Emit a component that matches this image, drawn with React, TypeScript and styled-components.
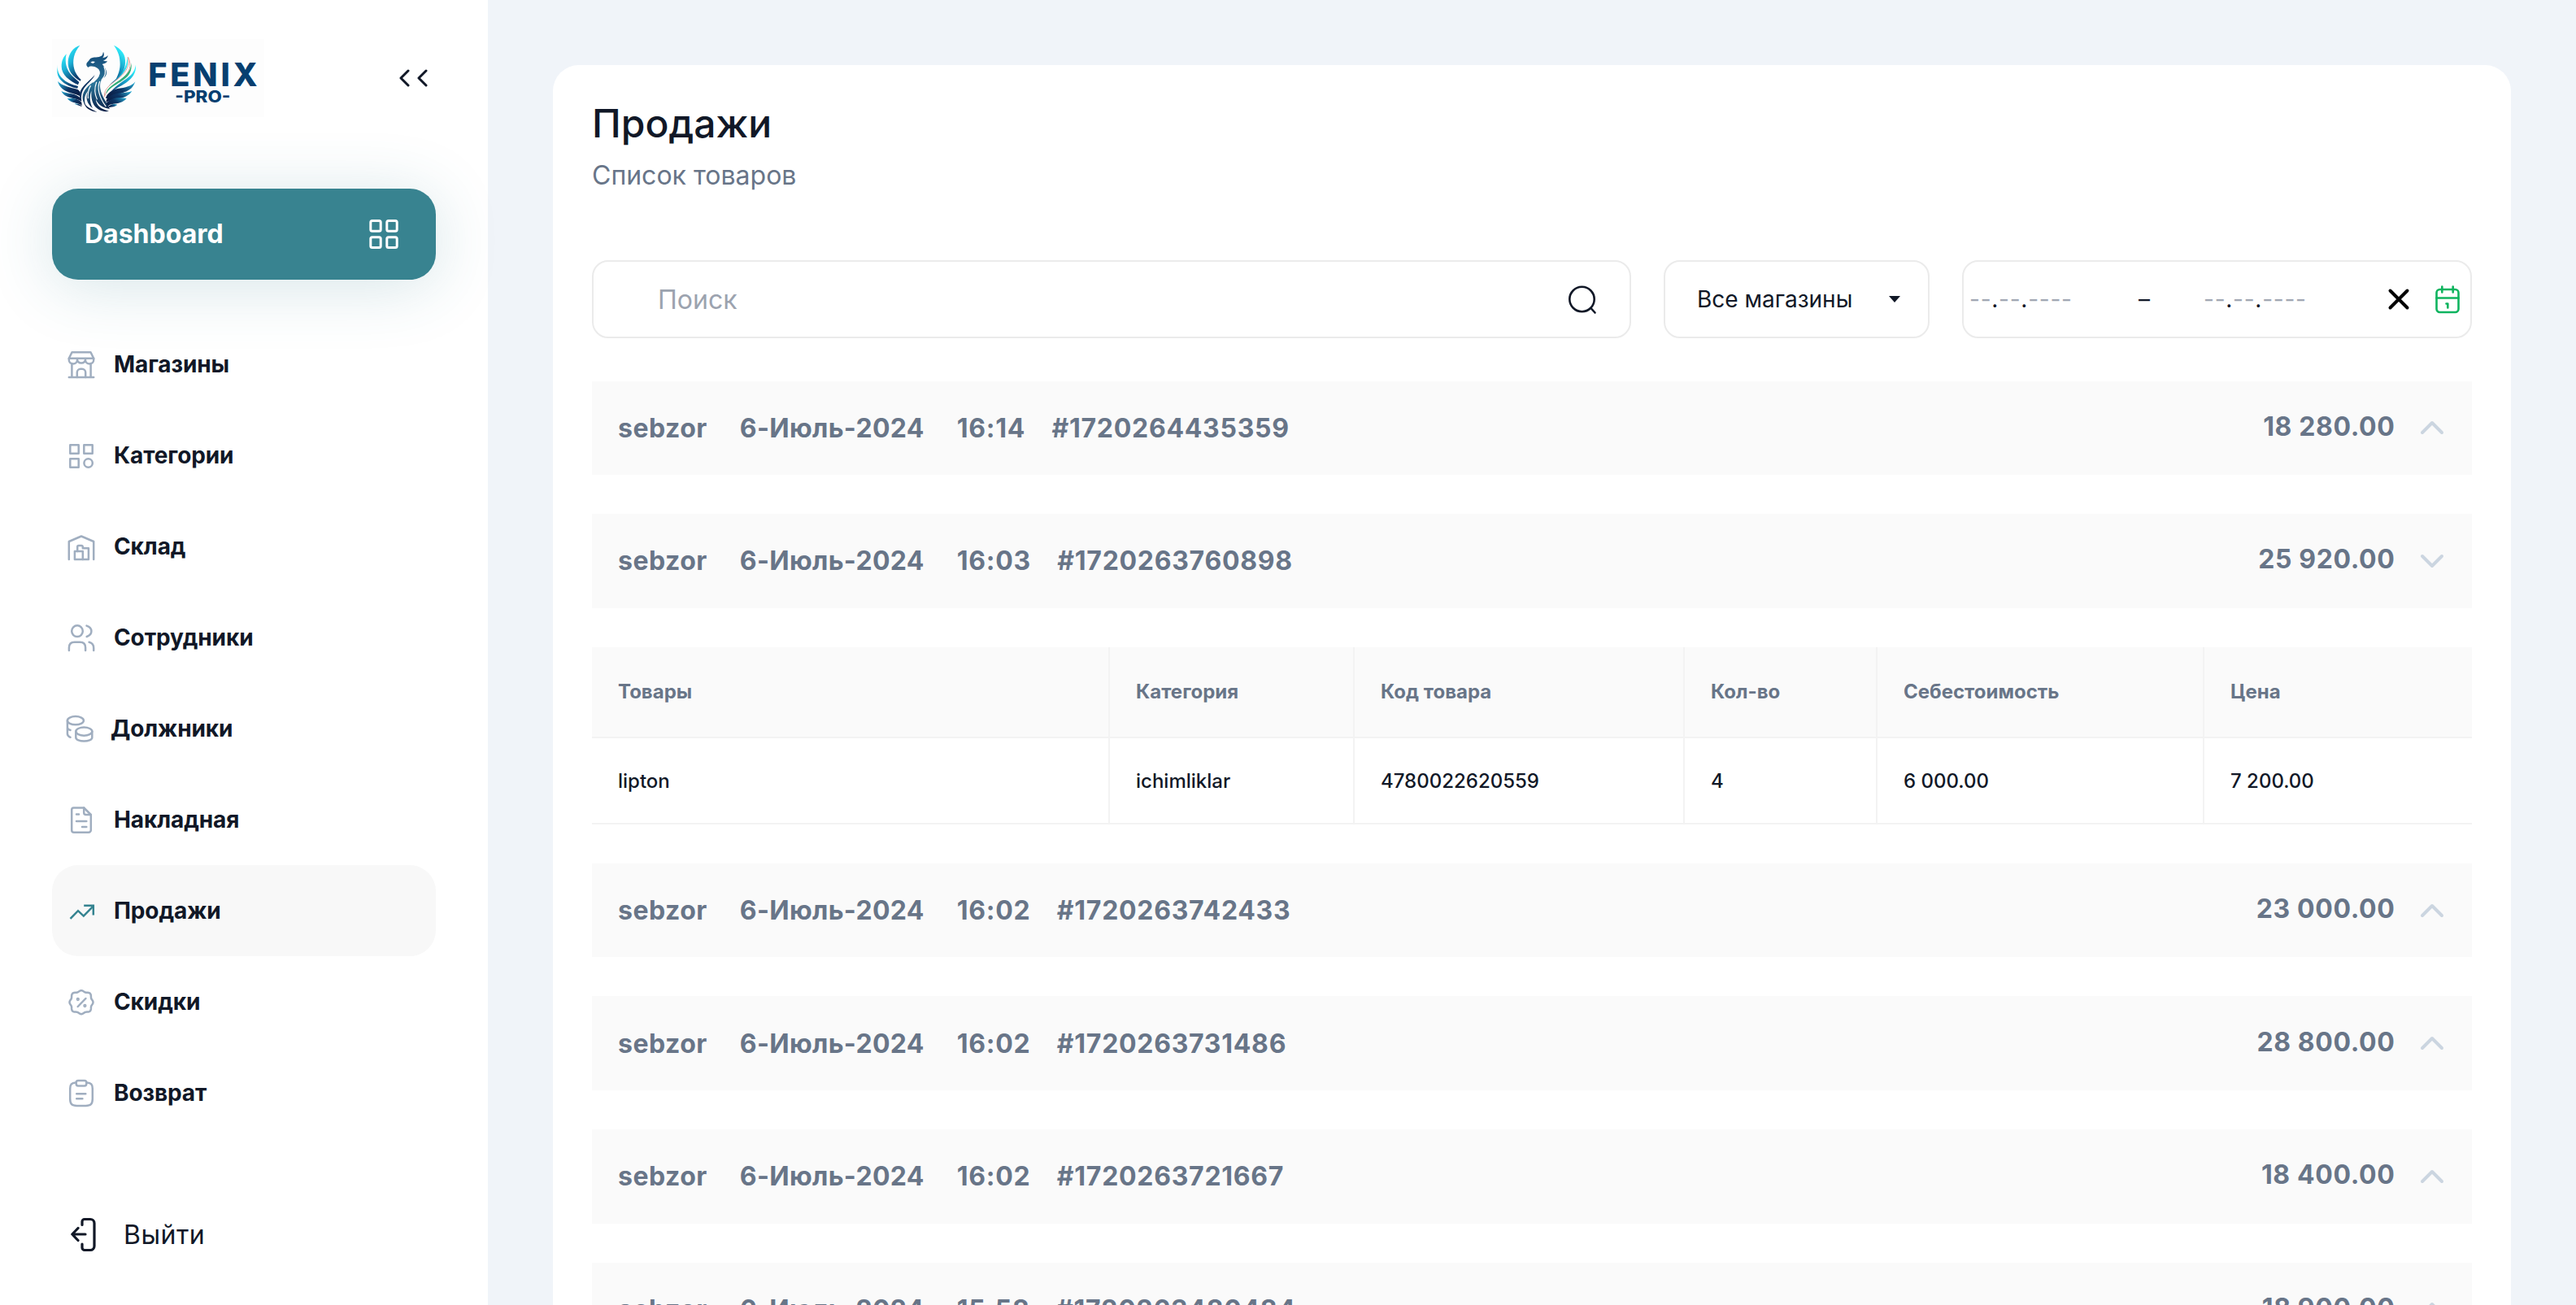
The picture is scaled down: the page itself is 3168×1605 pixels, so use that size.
import React from "react";
import styled, { createGlobalStyle } from "styled-components";

const GlobalStyle = createGlobalStyle`
  * { box-sizing: border-box; }
  body { margin: 0; background: #f0f4f9; font-family: Inter, "Noto Sans", sans-serif; color: #111827; }
  h1, p { margin: 0; }
`;

const Page = styled.div`
  display: flex;
  width: 3168px;
  height: 1605px;
  overflow: hidden;
`;

const Sidebar = styled.aside`
  display: flex;
  flex-direction: column;
  flex: none;
  width: 600px;
  padding: 48px 64px 0;
  background: #fff;
`;

const Brand = styled.div`
  display: flex;
  align-items: center;
  justify-content: space-between;
  height: 96px;
  padding-right: 10px;
`;

const LogoMark = styled.svg`
  width: 261px;
  height: 96px;
  background: #fdfdfd;
`;

const LogoName = styled.text`
  font: 800 119px Inter, sans-serif;
  fill: #073f70;
`;

const LogoTag = styled.text`
  font: 800 60px Inter, sans-serif;
  fill: #073f70;
`;

const DashboardButton = styled.a`
  display: flex;
  align-items: center;
  justify-content: space-between;
  height: 112px;
  margin-top: 88px;
  padding: 0 40px;
  border-radius: 32px;
  background: #388390;
  color: #fff;
  font-size: 32px;
  font-weight: 700;
  box-shadow: 0 8px 80px rgba(52, 124, 140, 0.2);
`;

const DashboardLabel = styled.span`
  padding-bottom: 2px;
`;

const Nav = styled.nav`
  display: flex;
  flex-direction: column;
  margin-top: 48px;
`;

const NavItem = styled.a<{ $active?: boolean }>`
  display: flex;
  align-items: center;
  gap: 20px;
  height: 112px;
  padding: 0 16px;
  border-radius: 32px;
  background: ${(p) => (p.$active ? "#f8f8f8" : "transparent")};
  color: #111827;
  font-size: 28px;
  font-weight: 700;
  letter-spacing: -0.1px;
`;

const NavIcon = styled.svg<{ $active?: boolean; $narrow?: boolean }>`
  flex: none;
  width: ${(p) => (p.$narrow ? 36 : 40)}px;
  height: 40px;
  overflow: visible;
  fill: none;
  stroke: ${(p) => (p.$active ? "#348390" : "#a0aec0")};
  stroke-width: 2.5;
  stroke-linecap: ${(p) => (p.$active ? "butt" : "round")};
  stroke-linejoin: ${(p) => (p.$active ? "miter" : "round")};
`;

const Logout = styled.a`
  display: flex;
  align-items: center;
  gap: 32px;
  height: 48px;
  margin-top: 94px;
  padding-left: 20px;
  font-size: 32px;
  letter-spacing: 0.5px;
`;

const Icon = styled.svg`
  flex: none;
  fill: none;
  stroke: currentColor;
  stroke-linecap: round;
  stroke-linejoin: round;
`;

const Main = styled.main`
  flex: 1;
  padding: 80px 80px 0;
`;

const Card = styled.section`
  display: flex;
  flex-direction: column;
  height: 1600px;
  padding: 40px 48px;
  border-radius: 32px;
  background: #fff;
`;

const Title = styled.h1`
  font-size: 48px;
  line-height: 64px;
  font-weight: 500;
`;

const Subtitle = styled.p`
  margin-top: 8px;
  font-size: 32px;
  line-height: 48px;
  font-weight: 400;
  color: #687588;
`;

const Filters = styled.div`
  display: flex;
  gap: 40px;
  margin-top: 80px;
`;

const Field = styled.div<{ $width: number }>`
  display: flex;
  align-items: center;
  width: ${(p) => p.$width}px;
  height: 96px;
  border: 2px solid #ebebeb;
  border-radius: 20px;
  background: #fff;
`;

const SearchField = styled(Field)`
  justify-content: space-between;
  padding: 0 38px 0 79px;
  font-size: 32px;
  color: #9ca3af;
`;

const SearchIcon = styled(Icon)`
  color: #111827;
`;

const SelectField = styled(Field)`
  justify-content: space-between;
  padding: 0 34px 0 39px;
  font-size: 28px;
`;

const DateField = styled(Field)`
  font-size: 28px;
  padding-left: 7px;
`;

const DateValue = styled.span`
  width: 207px;
  color: #111827;
  letter-spacing: 0.75px;
`;

const Dashes = styled.span`
  color: #a1a7b3;
`;

const DateSeparator = styled.span`
  width: 81px;
  padding-left: 1px;
`;

const DateActions = styled.div`
  display: flex;
  align-items: center;
  gap: 30px;
  margin-left: auto;
  padding-right: 12px;
`;

const Sales = styled.div`
  display: flex;
  flex-direction: column;
  gap: 48px;
  margin-top: 52.6px;
`;

const SaleRow = styled.div`
  display: flex;
  align-items: center;
  flex: none;
  height: 115.6px;
  padding: 0 32px;
  background: #fafafa;
  color: #687588;
  font-size: 32px;
  font-weight: 700;
`;

const Seller = styled.span`
  margin-right: 40px;
  letter-spacing: 0.5px;
`;

const SaleDate = styled.span`
  margin-right: 40px;
  letter-spacing: 0.32px;
`;

const SaleTime = styled.span`
  margin-right: 32.5px;
  letter-spacing: 0.7px;
`;

const SaleNumber = styled.span`
  letter-spacing: 0.72px;
`;

const Amount = styled.span`
  margin-left: auto;
  margin-right: 28.5px;
  padding-bottom: 4px;
  letter-spacing: 0.62px;
`;

const Table = styled.div`
  display: grid;
  flex: none;
  grid-template-columns: 637px 301px 406px 237px 402px 329px;
`;

const HeadCell = styled.div`
  display: flex;
  align-items: center;
  height: 112px;
  padding: 0 32px;
  border-right: 2px solid #f3f3f3;
  border-bottom: 2px solid #f3f3f3;
  background: #fafafa;
  color: #687588;
  font-size: 24px;
  font-weight: 700;
  &:nth-child(6) { border-right: 0; }
`;

const BodyCell = styled.div`
  display: flex;
  align-items: center;
  height: 106px;
  padding: 2px 32px 0;
  border-right: 2px solid #f3f3f3;
  border-bottom: 2px solid #f3f3f3;
  font-size: 24px;
  font-weight: 500;
  &:last-child { border-right: 0; }
`;

const badgePath =
  Array.from({ length: 97 }, (_, i) => {
    const a = (i / 96) * Math.PI * 2;
    const r = 14 + 0.9 * Math.cos(8 * a) - 0.4 * Math.cos(4 * a);
    return `${i ? "L" : "M"}${(20 + r * Math.cos(a)).toFixed(2)} ${(20.7 + r * Math.sin(a)).toFixed(2)}`;
  }).join("") + "Z";

type Item = { label: string; icon: React.ReactNode; active?: boolean; narrow?: boolean };

const navItems: Item[] = [
  {
    label: "Магазины",
    icon: (
      <>
        <path d="M8.5 5.2H31.5L35.2 12.8H4.8Z" />
        <path d="M4.8 12.8V14.5A5.1 5 0 0 0 15 14.5A5.1 5 0 0 0 25 14.5A5.1 5 0 0 0 35.2 14.5V12.8" />
        <path d="M8.4 19V36M31.6 19V36M4.8 36H35.2" />
        <path d="M14.8 36V30A4.2 4.2 0 0 1 19 25.8H21A4.2 4.2 0 0 1 25.2 30V36" />
      </>
    ),
  },
  {
    label: "Категории",
    icon: (
      <>
        <rect x="6.3" y="7.2" width="10.4" height="10.6" />
        <rect x="23.3" y="7.2" width="10.4" height="10.6" />
        <rect x="6.3" y="24.2" width="10.4" height="10.6" />
        <circle cx="28.6" cy="29.5" r="5.2" />
      </>
    ),
  },
  {
    label: "Склад",
    icon: (
      <>
        <path d="M4.8 36V14L20 7.5L35.2 14V36" />
        <path d="M11.9 26H21.8V36H11.9Z" />
        <path d="M15.2 26V20.5A1.6 1.6 0 0 1 16.8 18.9H20.2A1.6 1.6 0 0 1 21.8 20.5V22.3H28.9V36H21.8" />
      </>
    ),
  },
  {
    label: "Сотрудники",
    icon: (
      <>
        <ellipse cx="15" cy="12.2" rx="6.8" ry="6.9" />
        <path d="M26.5 5.6C30.4 6.8 32.4 9.2 32.4 12.3S30.4 17.8 26.7 19" />
        <path d="M4.9 36V32.5C4.9 28.2 7.3 25.7 11.6 25.7H18.4C22.7 25.7 25.1 28.2 25.1 32.5V36" />
        <path d="M29.6 25.7C33.5 26.7 35.2 29.2 35.2 33V36" />
      </>
    ),
  },
  {
    label: "Должники",
    narrow: true,
    icon: (
      <>
        <ellipse cx="12.9" cy="10.2" rx="10" ry="5.1" />
        <path d="M2.9 10.2V26.5C2.9 28.7 4.3 29.8 6.6 30.8M2.9 18.5C3 20.3 4.4 21.5 6.6 21.9" />
        <ellipse cx="23.3" cy="23.6" rx="10" ry="5.1" />
        <path d="M13.3 23.6V31C13.3 37 33.3 37 33.3 31V23.6" />
      </>
    ),
  },
  {
    label: "Накладная",
    icon: (
      <>
        <path d="M10.5 5.5H23.2L31.8 14V33A2.8 2.8 0 0 1 29 35.8H11A2.8 2.8 0 0 1 8.2 33V8A2.5 2.5 0 0 1 10.5 5.5Z" />
        <path d="M23.2 5.5V11.5A2.5 2.5 0 0 0 25.7 14H31.8M14 13.5H17M14 22H26.3M21 28.9H26.3" />
      </>
    ),
  },
  {
    label: "Продажи",
    active: true,
    icon: (
      <>
        <path d="M6.5 29.8L16 20.2L22.8 26.6L34.5 14.6" />
        <path d="M23.2 13.8H34.8V25.4" />
      </>
    ),
  },
  {
    label: "Скидки",
    icon: (
      <>
        <path d={badgePath} />
        <path d="M15.7 26L25.4 16" />
        <circle cx="15.8" cy="17" r="0.9" />
        <circle cx="24.4" cy="25" r="0.9" />
      </>
    ),
  },
  {
    label: "Возврат",
    icon: (
      <>
        <path d="M13 7.5C8 7.8 6.2 9.5 6.2 15V27.5C6.2 34 8.5 35.9 14.5 35.9H25.5C31.5 35.9 33.8 34 33.8 27.5V15C33.8 9.5 32 7.8 27 7.5" />
        <rect x="13.7" y="5" width="12.6" height="6.4" rx="2.4" />
        <path d="M14.2 21.2H25.3M14.2 27.3H21.4" />
      </>
    ),
  },
];

const sales = [
  { time: "16:14", id: "#1720264435359", amount: "18 280.00" },
  { time: "16:03", id: "#1720263760898", amount: "25 920.00", open: true },
  { time: "16:02", id: "#1720263742433", amount: "23 000.00" },
  { time: "16:02", id: "#1720263731486", amount: "28 800.00" },
  { time: "16:02", id: "#1720263721667", amount: "18 400.00" },
  { time: "15:58", id: "#1720263480484", amount: "18 900.00" },
];

const columns = ["Товары", "Категория", "Код товара", "Кол-во", "Себестоимость", "Цена"];
const product = ["lipton", "ichimliklar", "4780022620559", "4", "6 000.00", "7 200.00"];

function Logo() {
  return (
    <LogoMark viewBox="12 12 783 288">
      <defs>
        <linearGradient id="wing" x1="0" y1="0" x2="0.35" y2="1">
          <stop offset="0" stopColor="#2ff3ff" />
          <stop offset="0.5" stopColor="#1bb0d6" />
          <stop offset="1" stopColor="#0b3a6c" />
        </linearGradient>
        <linearGradient id="wingRight" x1="0.3" y1="0" x2="0" y2="1">
          <stop offset="0" stopColor="#2ff3ff" />
          <stop offset="0.55" stopColor="#1594c0" />
          <stop offset="1" stopColor="#0b3a6c" />
        </linearGradient>
        <linearGradient id="tailLeft" x1="0" y1="0" x2="1" y2="0.6">
          <stop offset="0" stopColor="#27b4dc" />
          <stop offset="0.55" stopColor="#0d3565" />
          <stop offset="1" stopColor="#0a1f47" />
        </linearGradient>
        <linearGradient id="tailRight" x1="1" y1="0" x2="0" y2="0.6">
          <stop offset="0" stopColor="#27b4dc" />
          <stop offset="0.55" stopColor="#0d3565" />
          <stop offset="1" stopColor="#0a1f47" />
        </linearGradient>
        <linearGradient id="bodyFill" x1="0" y1="0" x2="0" y2="1">
          <stop offset="0" stopColor="#134a78" />
          <stop offset="0.55" stopColor="#2b7599" />
          <stop offset="1" stopColor="#0a1f47" />
        </linearGradient>
      </defs>
      <g fill="url(#wing)">
        <path d="M115 35C92 62 86 93 94 123C99 141 109 152 119 162L116 167C87 151 69 128 71 94C73 65 90 43 115 35Z" />
        <path d="M65 67C57 99 66 128 86 148C94 156 103 163 112 171L108 181C77 166 47 145 47 113C47 92 54 78 65 67Z" />
        <path d="M33 107C29 133 42 157 72 173C85 180 98 183 108 186L106 194C70 187 31 165 31 131C31 121 32 114 33 107Z" />
      </g>
      <g fill="url(#tailLeft)">
        <path d="M33 168C50 186 80 190 106 198C116 204 119 215 120 226C99 209 45 215 33 168Z" />
        <path d="M46 204C67 216 100 209 119 232L121 242C95 225 62 235 46 204Z" />
        <path d="M68 232C89 230 107 231 121 246L122 258C113 249 104 252 96 247C87 245 76 242 68 232Z" />
        <path d="M94 251C107 249 118 253 123 262Z" />
      </g>
      <g fill="url(#wingRight)">
        <path d="M240 35C268 49 285 68 282 102C280 130 264 153 242 171C249 160 263 132 263 106C263 77 256 57 240 35Z" />
        <path d="M321 107C325 151 288 173 257 190C246 196 236 203 226 210C240 192 259 177 278 164C304 148 318 130 321 107Z" />
        <path d="M289 78C297 109 283 130 263 151C246 168 227 182 214 199C225 173 248 164 265 142C280 124 289 104 289 78Z" />
      </g>
      <path d="M292 78C309 111 296 137 271 158C247 177 216 190 205 225C203 190 234 178 261 154C289 130 299 109 292 78Z" fill="#fff" stroke="#e2a49b" strokeWidth="3" />
      <path d="M305 100C307 130 298 147 275 163C250 181 225 190 211 215C213 190 243 178 268 158C293 141 302 124 305 100Z" fill="#30ae78" />
      <g fill="url(#tailRight)">
        <path d="M319 169C308 185 281 193 254 195C232 200 218 210 210 229C218 242 257 215 279 208C299 202 312 190 319 169Z" />
        <path d="M307 204C284 213 254 208 228 221C216 226 212 235 211 246C239 228 284 239 307 204Z" />
        <path d="M287 231C263 226 229 227 211 250L216 263C227 246 248 255 264 246C273 243 281 239 287 231Z" />
        <path d="M253 254C240 249 224 252 215 267C228 260 240 266 253 254Z" />
      </g>
      <path d="M139 107C138 99 147 94 151 87C160 76 176 83 191 76C199 73 199 67 201 59C206 69 203 77 198 82C207 81 213 77 219 73C215 84 209 90 201 91C207 95 211 94 216 94C211 103 202 103 197 105C219 128 217 147 201 157C192 163 187 177 190 195C194 219 209 240 225 270C198 265 185 257 173 235C177 258 190 270 222 278C202 283 182 275 169 259C158 241 155 223 158 203C149 220 151 246 162 267C140 251 134 226 145 203C130 219 130 239 136 258C120 239 121 213 139 193C151 178 170 170 183 151C191 139 190 127 179 119C167 111 151 111 145 117C143 113 139 112 139 107Z" fill="url(#bodyFill)" />
      <path d="M118 201C130 179 153 164 170 145C160 165 137 180 127 199C119 214 119 231 121 242C112 227 111 215 118 201Z" fill="#0b315f" />
      <path d="M130 247C139 263 154 270 178 281C151 279 134 266 130 247Z" fill="#0b1f47" />
      <path d="M204 114C213 136 208 149 195 163M184 127C192 145 178 160 164 171M176 172C169 190 169 215 178 234M154 185C145 200 143 211 145 230M188 169C178 191 184 225 210 260" fill="none" stroke="#fdfdfd" strokeWidth="3.5" strokeLinecap="round" />
      <path d="M154 99C160 93 166 95 171 96L164 102Z" fill="#fdfdfd" />
      <LogoName x="367" y="186" textLength="403" lengthAdjust="spacing">FENIX</LogoName>
      <LogoTag x="466" y="245" textLength="204" lengthAdjust="spacingAndGlyphs">-PRO-</LogoTag>
    </LogoMark>
  );
}

function EmptyDate() {
  return (
    <DateValue>
      <Dashes>--</Dashes>.<Dashes>--</Dashes>.<Dashes>----</Dashes>
    </DateValue>
  );
}

function Sale({ time, id, amount, open }: { time: string; id: string; amount: string; open?: boolean }) {
  return (
    <SaleRow>
      <Seller>sebzor</Seller>
      <SaleDate>6-Июль-2024</SaleDate>
      <SaleTime>{time}</SaleTime>
      <SaleNumber>{id}</SaleNumber>
      <Amount>{amount}</Amount>
      <Icon width="34" height="34" viewBox="0 0 34 34" color="#cbd5e0" strokeWidth="4">
        <path d={open ? "M5 11L17 23L29 11" : "M5 23L17 11L29 23"} />
      </Icon>
    </SaleRow>
  );
}

export default function App() {
  return (
    <>
      <GlobalStyle />
      <Page>
        <Sidebar>
          <Brand>
            <Logo />
            <Icon width="36" height="24" viewBox="0 0 36 24" strokeWidth="3">
              <path d="M12 3L3 12L12 21M34 3L25 12L34 21" />
            </Icon>
          </Brand>
          <DashboardButton>
            <DashboardLabel>Dashboard</DashboardLabel>
            <Icon width="48" height="48" viewBox="0 0 48 48" strokeWidth="3">
              <rect x="7.8" y="7.5" width="12.4" height="12.8" rx="2" />
              <rect x="27.8" y="7.5" width="12.4" height="12.8" rx="2" />
              <rect x="7.8" y="27.7" width="12.4" height="12.8" rx="2" />
              <rect x="27.8" y="27.7" width="12.4" height="12.8" rx="2" />
            </Icon>
          </DashboardButton>
          <Nav>
            {navItems.map((item) => (
              <NavItem key={item.label} $active={item.active}>
                <NavIcon viewBox={item.narrow ? "0 0 36 40" : "0 0 40 40"} $active={item.active} $narrow={item.narrow}>
                  {item.icon}
                </NavIcon>
                {item.label}
              </NavItem>
            ))}
          </Nav>
          <Logout>
            <Icon width="36" height="48" viewBox="0 0 36 48" strokeWidth="3.2">
              <path d="M17 12.5V8.5A3 3 0 0 1 20 5.5H27A5 5 0 0 1 32 10.5V38.5A5 5 0 0 1 27 43.5H20A3 3 0 0 1 17 40.5V36" />
              <path d="M21 24H5M12 16.5L4.8 24L12 31.5" />
            </Icon>
            Выйти
          </Logout>
        </Sidebar>
        <Main>
          <Card>
            <Title>Продажи</Title>
            <Subtitle>Список товаров</Subtitle>
            <Filters>
              <SearchField $width={1278}>
                Поиск
                <SearchIcon width="40" height="40" viewBox="0 0 40 40" strokeWidth="2.6">
                  <circle cx="19.5" cy="20" r="15.2" />
                  <path d="M30.5 31L35.5 36.5" />
                </SearchIcon>
              </SearchField>
              <SelectField $width={327}>
                Все магазины
                <svg width="14" height="8" viewBox="0 0 14 8">
                  <path d="M0 0H14L7 8Z" fill="#111827" />
                </svg>
              </SelectField>
              <DateField $width={627}>
                <EmptyDate />
                <DateSeparator>–</DateSeparator>
                <EmptyDate />
                <DateActions>
                  <Icon width="28" height="28" viewBox="0 0 28 28" color="#000" strokeWidth="4">
                    <path d="M3.5 3.5L24.5 24.5M24.5 3.5L3.5 24.5" />
                  </Icon>
                  <Icon width="32" height="36" viewBox="0 0 32 36" color="#0fb45f" strokeWidth="2.6">
                    <rect x="2.5" y="6" width="27" height="28" rx="4" />
                    <path d="M2.5 16.5H29.5M9.3 2.5V9.5M22.7 2.5V9.5M14.5 23.5H16.3V28.5" />
                  </Icon>
                </DateActions>
              </DateField>
            </Filters>
            <Sales>
              <Sale {...sales[0]} />
              <Sale {...sales[1]} />
              <Table>
                {columns.map((c) => (
                  <HeadCell key={c}>{c}</HeadCell>
                ))}
                {product.map((v, i) => (
                  <BodyCell key={i}>{v}</BodyCell>
                ))}
              </Table>
              {sales.slice(2).map((s) => (
                <Sale key={s.id} {...s} />
              ))}
            </Sales>
          </Card>
        </Main>
      </Page>
    </>
  );
}
